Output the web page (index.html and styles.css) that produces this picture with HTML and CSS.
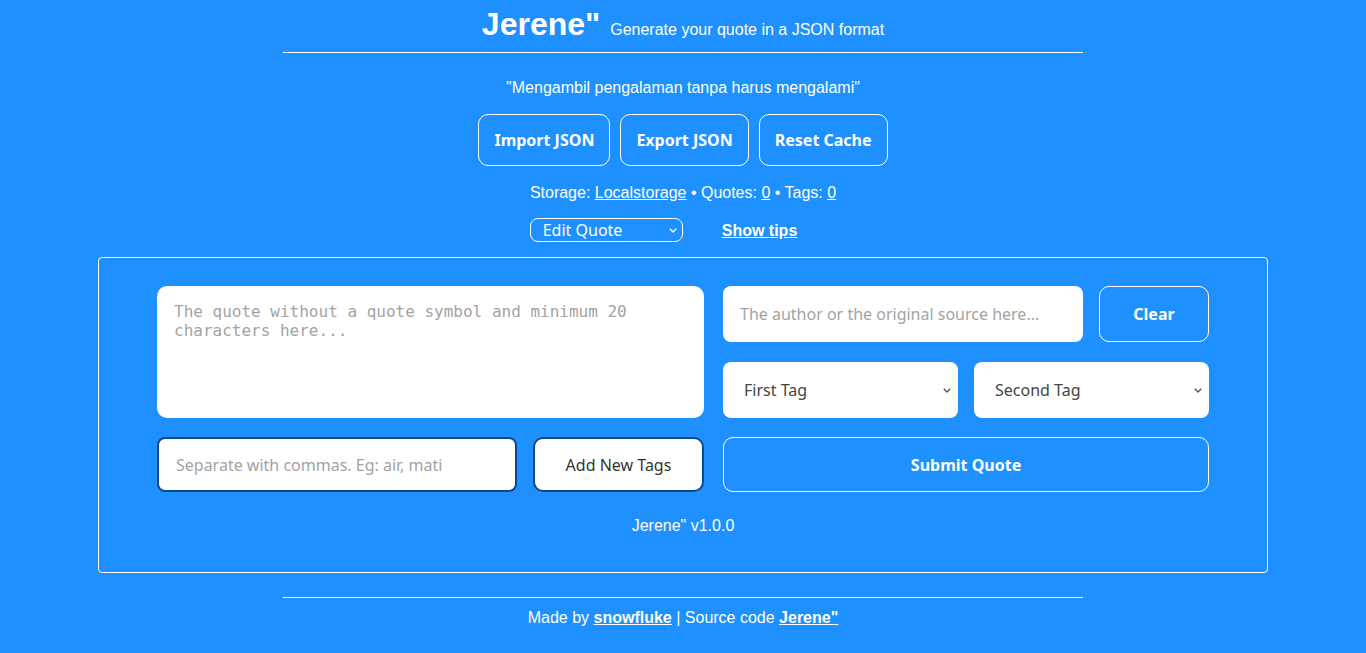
FILE: index.html
```html
<!DOCTYPE html>
<html>
<head>
<meta charset="utf-8">
<link rel="stylesheet" href="styles.css">
</head>
<body>
<header class="top">
  <h1 class="brand">Jerene"</h1>
  <span class="tagline">Generate your quote in a JSON format</span>
</header>
<p class="motto">"Mengambil pengalaman tanpa harus mengalami"</p>
<div class="actions">
  <button class="btn-outline">Import JSON</button>
  <button class="btn-outline">Export JSON</button>
  <button class="btn-outline">Reset Cache</button>
</div>
<p class="stats">Storage: <a href="#">Localstorage</a> • Quotes: <a href="#">0</a> • Tags: <a href="#">0</a></p>
<div class="modes">
  <span class="sel-wrap sel-mode">
    <select class="mode-select"><option>Edit Quote</option></select>
    <svg class="chev chev-light" width="8" height="5" viewBox="0 0 8 5"><path d="M0.8 0.8 L4 4 L7.2 0.8" fill="none" stroke="currentColor" stroke-width="1.4"/></svg>
  </span>
  <a href="#" class="tips">Show tips</a>
</div>
<main class="panel">
  <div class="grid">
    <textarea class="quote" placeholder="The quote without a quote symbol and minimum 20 characters here..."></textarea>
    <div class="row row-author">
      <input class="field" placeholder="The author or the original source here...">
      <button class="btn-outline btn-clear">Clear</button>
    </div>
    <div class="row row-tags">
      <span class="sel-wrap sel-tag">
        <select class="field-select"><option>First Tag</option></select>
        <svg class="chev" width="8" height="5" viewBox="0 0 8 5"><path d="M0.8 0.8 L4 4 L7.2 0.8" fill="none" stroke="currentColor" stroke-width="1.4"/></svg>
      </span>
      <span class="sel-wrap sel-tag">
        <select class="field-select"><option>Second Tag</option></select>
        <svg class="chev" width="8" height="5" viewBox="0 0 8 5"><path d="M0.8 0.8 L4 4 L7.2 0.8" fill="none" stroke="currentColor" stroke-width="1.4"/></svg>
      </span>
    </div>
    <div class="row row-new">
      <input class="field field-dark" placeholder="Separate with commas. Eg: air, mati">
      <button class="btn-light">Add New Tags</button>
    </div>
    <button class="btn-outline btn-submit">Submit Quote</button>
  </div>
  <p class="version">Jerene" v1.0.0</p>
</main>
<footer class="bottom">
  Made by <a href="#"><b>snowfluke</b></a> | Source code <a href="#"><b>Jerene"</b></a>
</footer>
</body>
</html>
```
FILE: styles.css
```css
* { box-sizing: border-box; }
html, body { margin: 0; }
body {
  background: #1e90ff;
  color: #fff;
  font-family: "Liberation Sans", Arial, sans-serif;
  font-size: 16px;
  height: 653px;
  overflow: hidden;
}
a { color: #fff; }
.top {
  width: 800px;
  margin: 0 auto;
  display: flex;
  justify-content: center;
  align-items: baseline;
  gap: 10px;
  padding: 6px 0 9px;
  border-bottom: 1px solid #fff;
}
.brand {
  margin: 0;
  font-size: 32px;
  line-height: 37px;
  font-weight: bold;
}
.tagline { font-size: 16px; }
.motto {
  margin: 26px 0 0;
  text-align: center;
  line-height: 18px;
}
.actions {
  margin-top: 17px;
  display: flex;
  justify-content: center;
  gap: 10px;
}
.btn-outline {
  font-family: "Noto Sans", "Open Sans", sans-serif;
  font-weight: bold;
  font-size: 16px;
  color: #fff;
  background: transparent;
  border: 1px solid #fff;
  border-radius: 10px;
  height: 52px;
  padding: 0 15px;
  cursor: pointer;
}
.stats {
  margin: 18px 0 0;
  text-align: center;
  line-height: 18px;
}
.modes {
  margin-top: 16px;
  display: flex;
  justify-content: center;
  align-items: center;
  gap: 39px;
  padding-right: 39px;
}
.sel-wrap {
  position: relative;
  display: flex;
}
.chev {
  position: absolute;
  right: 7px;
  top: 50%;
  margin-top: -2px;
  color: #555;
  pointer-events: none;
}
.chev-light { color: #fff; right: 6px; }
.mode-select {
  appearance: none;
  -webkit-appearance: none;
  width: 153px;
  height: 24px;
  background: transparent;
  color: #fff;
  border: 1px solid #fff;
  border-radius: 8px;
  font-family: "Noto Sans", "Open Sans", sans-serif;
  font-size: 16px;
  padding: 0 12px;
}
.mode-select option { color: #000; }
.tips { font-weight: bold; margin-top: 1px; }
.panel {
  width: 1170px;
  margin: 15px auto 0;
  border: 1px solid #fff;
  border-radius: 4px;
  padding: 28px 0 37px;
}
.grid {
  width: 1052px;
  margin: 0 auto;
  display: grid;
  grid-template-columns: 547px 486px;
  grid-template-rows: 56px 56px 55px;
  column-gap: 19px;
  row-gap: 20px;
}
.row { display: flex; gap: 16px; }
.row-author { grid-column: 2; grid-row: 1; }
.row-tags { grid-column: 2; grid-row: 2; }
.row-new { grid-column: 1; grid-row: 3; margin-top: -1px; height: 55px; }
.btn-submit { grid-column: 2; grid-row: 3; height: 55px; margin-top: -1px; }
.quote {
  grid-column: 1;
  grid-row: 1 / span 2;
  border: none;
  border-radius: 10px;
  background: #fff;
  resize: none;
  padding: 16px 17px;
  font-family: "DejaVu Sans Mono", monospace;
  font-size: 16px;
  line-height: 19px;
}
.quote::placeholder, .field::placeholder { color: #a3a3a3; }
.field {
  flex: 0 0 360px;
  height: 100%;
  border: none;
  border-radius: 8px;
  background: #fff;
  padding: 0 17px;
  font-family: "Noto Sans", "Open Sans", sans-serif;
  font-size: 16px;
}
.field-dark { border: 2px solid #0b4a8f; }
.btn-clear { flex: 1; height: 56px; }
.sel-tag { flex: 1; }
.field-select {
  appearance: none;
  -webkit-appearance: none;
  width: 100%;
  height: 56px;
  border: none;
  border-radius: 8px;
  background: #fff;
  color: #444;
  padding: 0 21px;
  font-family: "Noto Sans", "Open Sans", sans-serif;
  font-size: 16px;
}
.btn-light {
  flex: 1;
  background: #fff;
  color: #333;
  border: 2px solid #0b4a8f;
  border-radius: 10px;
  font-family: "Noto Sans", "Open Sans", sans-serif;
  font-size: 16px;
}
.version {
  margin: 24px 0 0;
  text-align: center;
  line-height: 18px;
}
.bottom {
  width: 800px;
  margin: 24px auto 0;
  border-top: 1px solid #fff;
  padding-top: 11px;
  text-align: center;
  line-height: 18px;
}
```
